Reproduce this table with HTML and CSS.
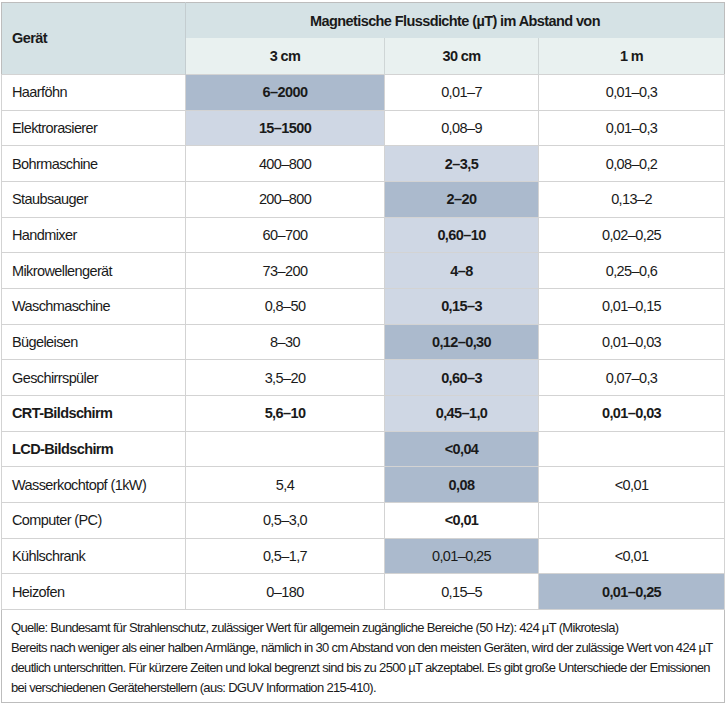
FILE: index.html
```html
<!DOCTYPE html>
<html lang="de">
<head>
<meta charset="utf-8">
<title>Magnetische Flussdichte</title>
<link rel="stylesheet" href="styles.css">
</head>
<body>
<div class="wrap">
<table class="tbl">
  <colgroup>
    <col class="c1"><col class="c2"><col class="c3"><col class="c4">
  </colgroup>
  <thead>
    <tr class="h1">
      <th class="name" rowspan="2">Gerät</th>
      <th class="group" colspan="3">Magnetische Flussdichte (µT) im Abstand von</th>
    </tr>
    <tr class="h2">
      <th>3 cm</th><th>30 cm</th><th>1 m</th>
    </tr>
  </thead>
  <tbody>
    <tr><td>Haarföhn</td><td class="dark b">6–2000</td><td>0,01–7</td><td>0,01–0,3</td></tr>
    <tr><td>Elektrorasierer</td><td class="light b">15–1500</td><td>0,08–9</td><td>0,01–0,3</td></tr>
    <tr><td>Bohrmaschine</td><td>400–800</td><td class="light b">2–3,5</td><td>0,08–0,2</td></tr>
    <tr><td>Staubsauger</td><td>200–800</td><td class="dark b">2–20</td><td>0,13–2</td></tr>
    <tr><td>Handmixer</td><td>60–700</td><td class="light b">0,60–10</td><td>0,02–0,25</td></tr>
    <tr><td>Mikrowellengerät</td><td>73–200</td><td class="light b">4–8</td><td>0,25–0,6</td></tr>
    <tr><td>Waschmaschine</td><td>0,8–50</td><td class="light b">0,15–3</td><td>0,01–0,15</td></tr>
    <tr><td>Bügeleisen</td><td>8–30</td><td class="dark b">0,12–0,30</td><td>0,01–0,03</td></tr>
    <tr><td>Geschirrspüler</td><td>3,5–20</td><td class="light b">0,60–3</td><td>0,07–0,3</td></tr>
    <tr><td class="b">CRT-Bildschirm</td><td class="b">5,6–10</td><td class="light b">0,45–1,0</td><td class="b">0,01–0,03</td></tr>
    <tr><td class="b">LCD-Bildschirm</td><td></td><td class="dark b">&lt;0,04</td><td></td></tr>
    <tr><td>Wasserkochtopf (1kW)</td><td>5,4</td><td class="dark b">0,08</td><td>&lt;0,01</td></tr>
    <tr><td>Computer (PC)</td><td>0,5–3,0</td><td class="b">&lt;0,01</td><td></td></tr>
    <tr><td>Kühlschrank</td><td>0,5–1,7</td><td class="dark">0,01–0,25</td><td>&lt;0,01</td></tr>
    <tr><td>Heizofen</td><td>0–180</td><td>0,15–5</td><td class="dark b">0,01–0,25</td></tr>
  </tbody>
  <tfoot>
    <tr>
      <td colspan="4" class="note">
        <span class="line">Quelle: Bundesamt für Strahlenschutz, zulässiger Wert für allgemein zugängliche Bereiche (50 Hz): 424 µT (Mikrotesla)</span>
        <span class="line">Bereits nach weniger als einer halben Armlänge, nämlich in 30 cm Abstand von den meisten Geräten, wird der zulässige Wert von 424 µT</span>
        <span class="line">deutlich unterschritten. Für kürzere Zeiten und lokal begrenzt sind bis zu 2500 µT akzeptabel. Es gibt große Unterschiede der Emissionen</span>
        <span class="line">bei verschiedenen Geräteherstellern (aus: DGUV Information 215-410).</span>
      </td>
    </tr>
  </tfoot>
</table>
</div>
</body>
</html>
```

FILE: styles.css
```css
html, body {
  margin: 0;
  padding: 0;
  background: #ffffff;
}

.wrap {
  padding: 2px 2px 0 1px;
}

.tbl {
  width: 723px;
  border-collapse: collapse;
  table-layout: fixed;
  font-family: "Liberation Sans", Arial, sans-serif;
  font-size: 14.5px;
  letter-spacing: -0.6px;
  color: #1a1a1a;
  border: 1px solid #bdbdbd;
}

.c1 { width: 184px; }
.c2 { width: 199px; }
.c3 { width: 154px; }
.c4 { width: 186px; }

.tbl th {
  font-weight: bold;
  padding: 0;
}

.h1 th {
  background: #d5e2e5;
  height: 35px;
}

.h1 .name {
  text-align: left;
  padding-left: 10px;
  padding-bottom: 2px;
  border-right: 1px solid #c4cdd0;
}

.h2 th {
  background: #e9f1f0;
  height: 36px;
  border-left: 1px solid #cfd6d6;
}

.tbl tbody td {
  height: 34.67px;
  padding: 0;
  text-align: center;
  border: 1px solid #d3d3d3;
}

.tbl tbody td:first-child {
  text-align: left;
  padding-left: 10px;
}

.dark { background: #abbacd; }
.light { background: #cfd7e4; }
.b { font-weight: bold; }

.note {
  font-size: 13px;
  letter-spacing: -0.68px;
  line-height: 20px;
  padding: 8px 9px 4px 9px;
  text-align: left;
  border-top: 1px solid #c6c6c6;
}

.line {
  display: block;
  white-space: nowrap;
}
```
